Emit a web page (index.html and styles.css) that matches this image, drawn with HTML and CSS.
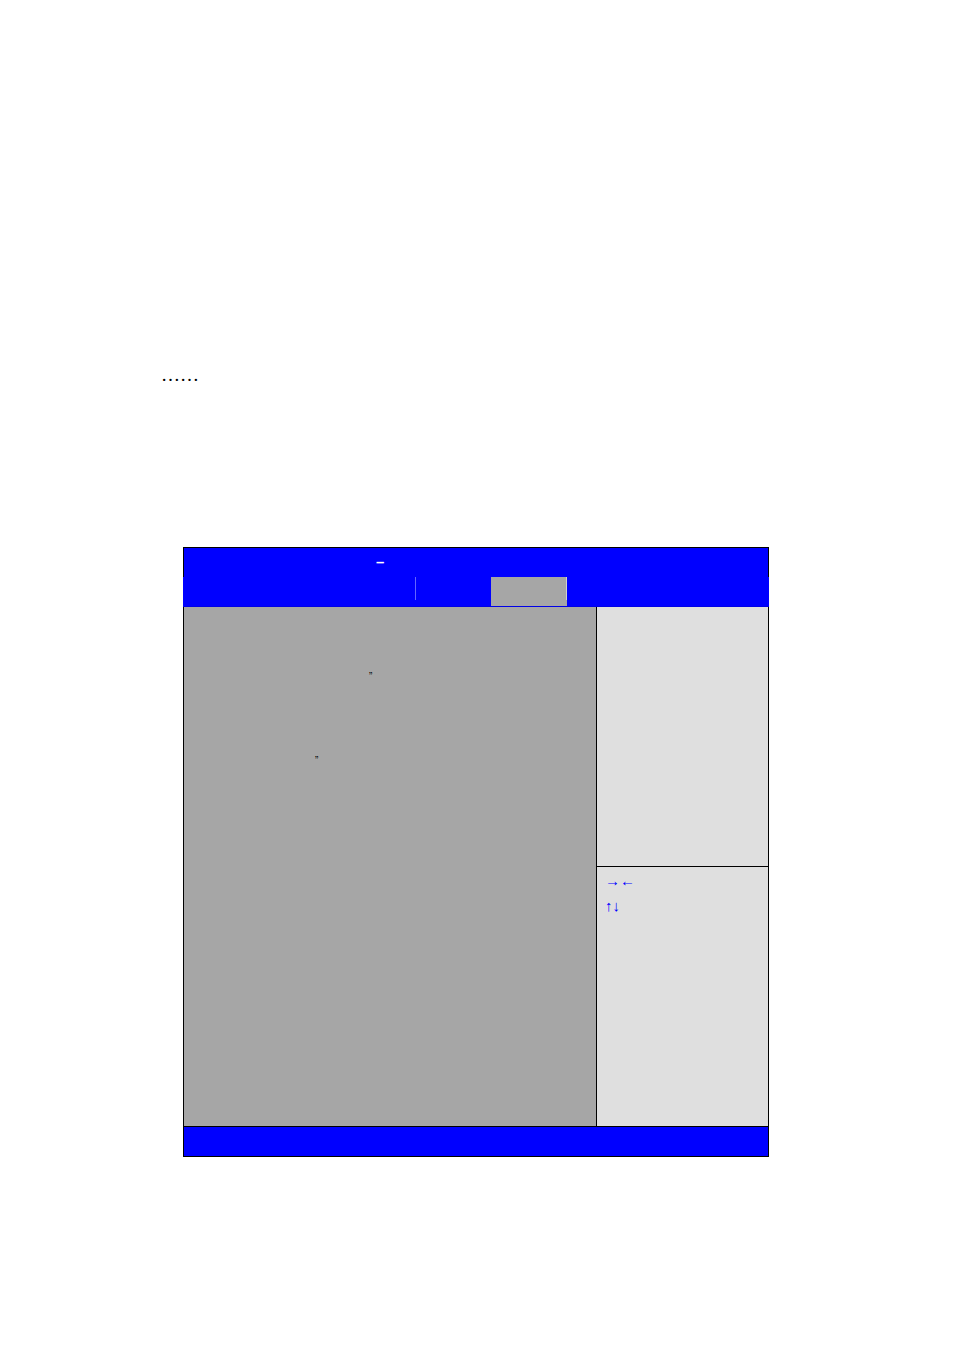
FILE: index.html
```
<!DOCTYPE html>
<html lang="en">
<head>
    <meta charset="UTF-8">
    <meta name="viewport" content="width=device-width, initial-scale=1.0">
    <title>Setup</title>
    <link rel="stylesheet" href="styles.css">
</head>
<body>
    <p class="intro">……</p>

    <main class="setup">
        <header class="title">–</header>

        <div class="tabs">
            <div class="tab"></div>
            <div class="tab divided"></div>
            <div class="tab active"></div>
        </div>

        <div class="content">
            <section class="options">
                <p class="option wide">”</p>
                <p class="option">”</p>
            </section>
            <aside class="side">
                <div class="help"></div>
                <div class="keys">
                    <p>→←</p>
                    <p>↑↓</p>
                </div>
            </aside>
        </div>

        <footer class="footer"></footer>
    </main>
</body>
</html>
```
FILE: styles.css
```
* {
    box-sizing: border-box;
}
body {
    margin: 0;
    padding: 364px 185px 190px 183px;
    background-color: #fff;
    color: #000;
    font-family: "Liberation Sans", Arial, sans-serif;
}
p {
    margin: 0;
}
.intro {
    margin: 0 0 161px -22px;
    font-family: "Liberation Serif", "Times New Roman", serif;
    font-size: 19px;
    line-height: 22px;
}

/* title bar and tabs */
.title {
    height: 30px;
    padding-left: 192px;
    border: 1px solid #000;
    border-bottom: none;
    background-color: #00f;
    color: #fff;
    font-size: 15px;
    font-weight: bold;
    line-height: 28px;
}
.tabs {
    display: grid;
    grid-template-columns: 232px 76px 76px 1fr;
    height: 30px;
    background-color: #00f;
    border-bottom: 1px solid #0000e6;
}
.divided {
    height: 23px;
    border-left: 1px solid #6464ff;
}
.active {
    background: linear-gradient(#d0d0d0, #d0d0d0) top right / 1px 23px no-repeat #a6a6a6;
}

/* main area */
.content {
    display: flex;
    min-height: 519px;
    border: 1px solid #000;
    border-width: 0 1px;
}
.options {
    flex: 1;
    padding-top: 60px;
    background-color: #a6a6a6;
}
.option {
    padding-left: 131px;
    font-size: 10px;
    line-height: 20px;
}
.option.wide {
    margin-bottom: 64px;
    padding-left: 185px;
}
.side {
    display: flex;
    flex-direction: column;
    width: 172px;
    border-left: 1px solid #000;
    background-color: #dfdfdf;
}
.help {
    height: 260px;
    border-bottom: 1px solid #000;
}
.keys {
    padding: 1px 8px;
    color: #00f;
    font-size: 15px;
    line-height: 25px;
}
.footer {
    height: 31px;
    border: 1px solid #000;
    background-color: #00f;
}
```
